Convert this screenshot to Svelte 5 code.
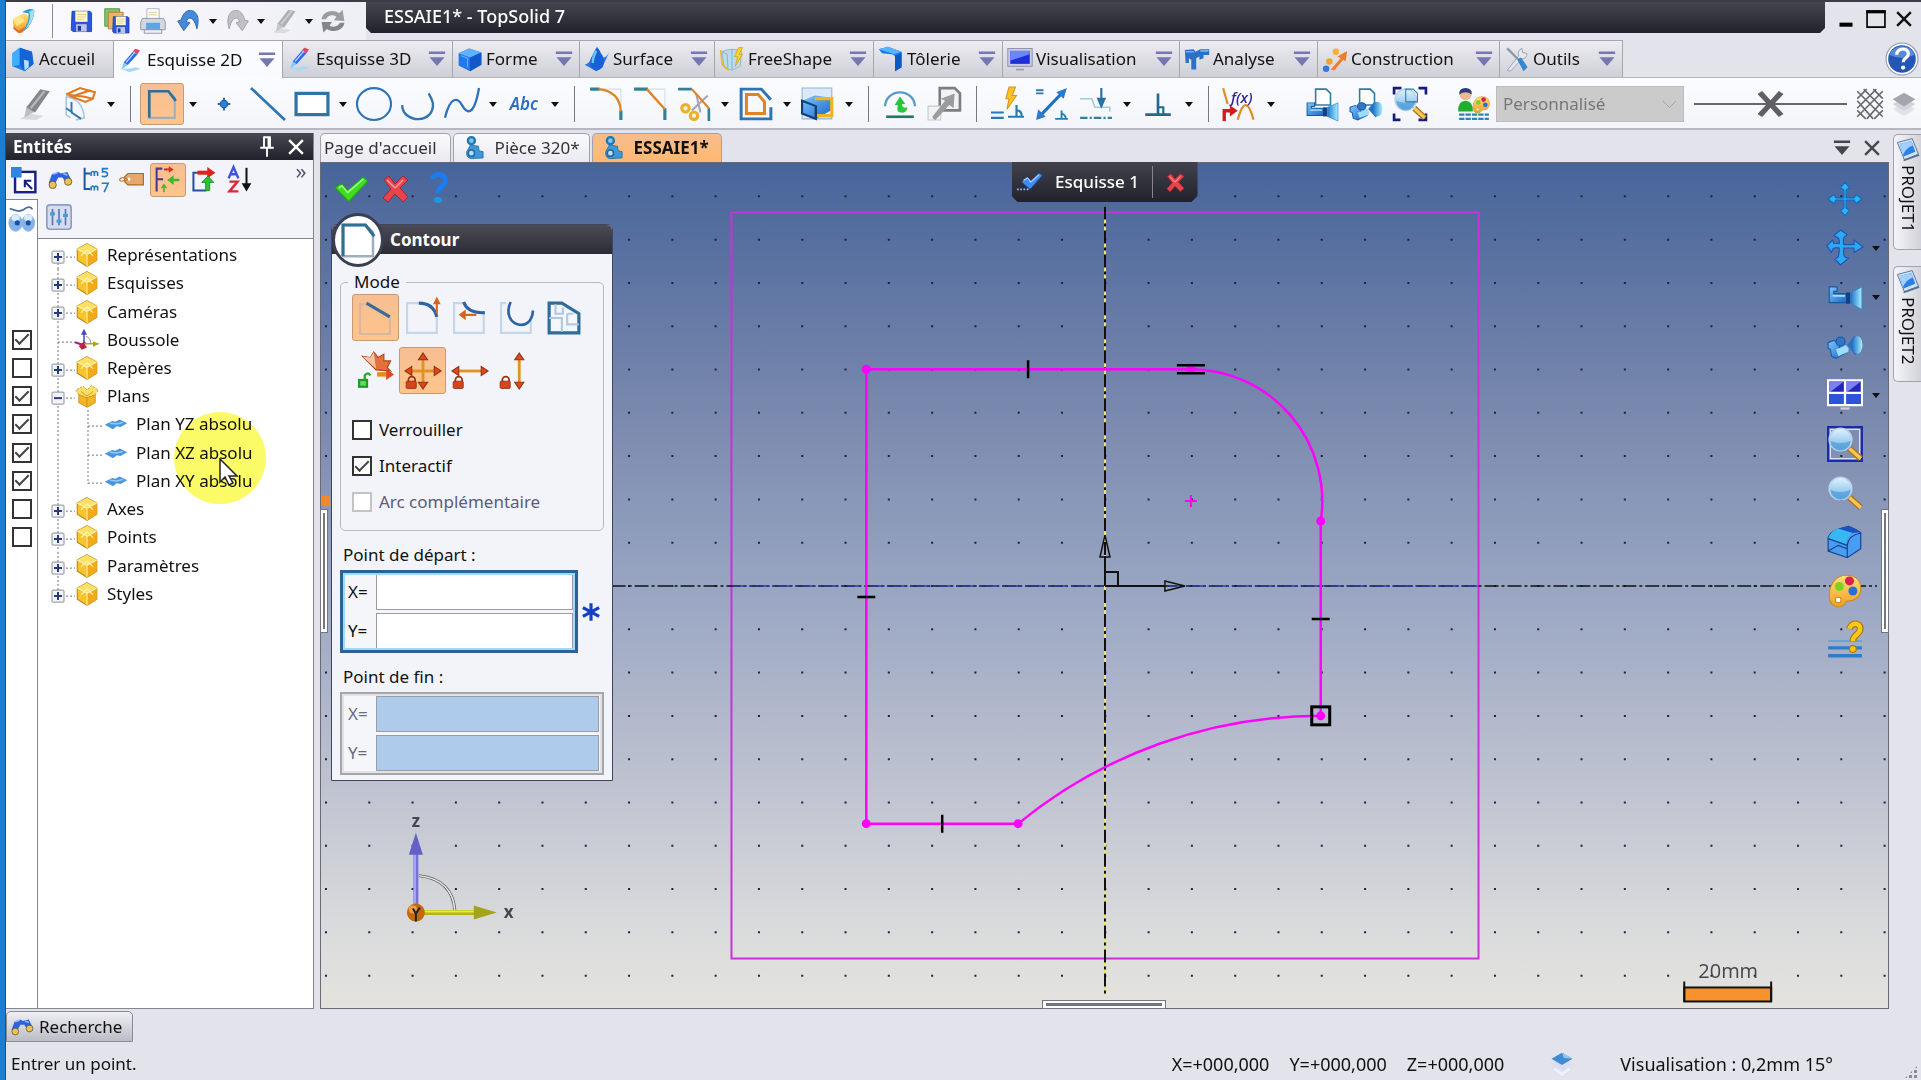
<script lang="ts">
  // every icon is drawn on a 32 x 32 grid
  const magnifier = `<circle cx="12" cy="12" r="10" fill="url(#lens)" stroke="#b9d3ea" stroke-width="1.5"/><path d="M3 13q9 4 18 0a9 9 0 0 1-18 0z" fill="#3c8fd0" opacity=".55"/><path d="M20 20l10 9" stroke="#a8761a" stroke-width="5.5"/><path d="M20 20l10 9" stroke="#f6c65a" stroke-width="3"/>`;
  const pencil = (c: string, d: string) => `<path d="M1 30l8-5 14 2-7 4z" fill="${d}" opacity=".5"/><path d="M5 29l2-11 8 5z" fill="${d}"/><path d="M7 19L20 2l9 2-14 20z" fill="${c}"/><path d="M11 20L24 4" stroke="#fff" stroke-width="2" opacity=".4"/>`;
  const floppy = `<path d="M5 4h22l2 2v23H6l-2-2z" fill="#2c56d8" stroke="#2038a0"/><rect x="9" y="4" width="15" height="13" fill="#fdf7c8"/><path d="M11 8h11M11 11h11M11 14h8" stroke="#d9c987"/><rect x="10" y="20" width="13" height="9" fill="#b9c6ea"/><rect x="12" y="22" width="4" height="6" fill="#2038a0"/>`;
  const lock = `<path d="M3 26v-2a3 3 0 0 1 6 0v2" fill="none" stroke="#9a3312" stroke-width="1.5"/><rect x="1" y="25" width="9" height="6.500" rx="1" fill="#d8451c" stroke="#8a2a10" stroke-width=".7"/>`;
  const camera = `<path d="M2 7h7v4H6v2h12v8H2z" fill="url(#blue)" stroke="#155c9d"/><path d="M5 15h11" stroke="#a8e0ff" stroke-width="1.500"/><path d="M17 12h4v10h-4z" fill="#173f80"/><path d="M21 12l10-5v20l-10-5z" fill="url(#cyan)" stroke="#2c84c4" stroke-width=".7"/>`;
  const camera2 = `<path d="M1 13l5-2 5 3v4l6-2v6l-9 5-4-2-1-6-2-1z" fill="url(#blue)" stroke="#175ea8"/><path d="M8 19l9-4 2 3v3l-9 4z" fill="#9bdcff"/><circle cx="12" cy="12" r="4" fill="#2e78cc" stroke="#1a55a0"/><path d="M18 15l6-8 5 3v11l-4 3z" fill="#2770c4"/><ellipse cx="27" cy="15" rx="4.500" ry="8" fill="url(#cyan)"/>`;
  const binoculars = `<path d="M2 20l4-11 8-3 3 2 8-2 5 10-7 3-4-6-5 0-4 7z" fill="#2f63dd"/><path d="M7 9l6-2M20 8l5 2" stroke="#8fb5ff" stroke-width="2"/><circle cx="7" cy="22" r="4.500" fill="#e6c35c" stroke="#6b5212"/><circle cx="26" cy="18" r="4.500" fill="#e6c35c" stroke="#6b5212"/>`;
  const document = `<path d="M10 2h10l4 4v11H10z" fill="#fff" stroke="#2f7d9c" stroke-width="1.5"/>`;
  const palette = `<path d="M17 2c9 0 13 5 13 12 0 8-6 11-12 11-2 0-2 5-7 5-6 0-9-4-9-10C2 10 8 2 17 2z" fill="url(#gold)" stroke="#c98d24"/><circle cx="11" cy="12" r="4" fill="#7bd321"/><circle cx="20" cy="7" r="4" fill="#d9204f"/><circle cx="23" cy="16" r="4" fill="#2a6fd0"/><circle cx="10" cy="24" r="2.500" fill="#fff" stroke="#c98d24"/>`;

  const icons: Record<string, string> = {
    logo: `<path d="M3 14l13-7 8 5-3 12-10 5-7-6z" fill="url(#gold)"/><path d="M3 14l8-4 6 6-9 6z" fill="#ffe48a"/><path d="M4 22l6 5 8-5-4 7-4 1-6-5z" fill="#e8682c"/><path d="M14 6q9-6 14-2-1 16-14 25 9-14 7-22z" fill="#2a9fd0"/><path d="M22 5q6-3 6-1-1 13-11 22 8-12 5-21z" fill="#9fdcf0"/>`,
    save: floppy,
    saveAll: `<path d="M2 2h17v20H2z" fill="#83c46a" stroke="#4f8f3c"/><path d="M6 6h17v19H6z" fill="#e9b56a" stroke="#b87a2e"/><g transform="translate(8 8) scale(.75)">${floppy}</g>`,
    print: `<path d="M9 2h14v12H9z" fill="#fff" stroke="#aab"/><path d="M11 6h10M11 9h10" stroke="#e0c080"/><path d="M4 13h24l2 4v9H2v-9z" fill="#d4d7e2" stroke="#8a8fa0"/><path d="M8 18h16v8H8z" fill="#5ba6e6"/><path d="M6 26h20v4H6z" fill="#eef0f6" stroke="#8a8fa0"/>`,
    undo: `<path d="M1 16l7 11 7-9-4-1c2-7 9-6 12 8C28 8 19 1 11 5 8 7 6 11 5 15z" fill="#4689d8" stroke="#2360b0" transform="translate(2 0)"/>`,
    redo: `<path d="M31 16l-7 11-7-9 4-1c-2-7-9-6-12 8C4 8 13 1 21 5c3 2 5 6 6 10z" fill="#bfc1c6" stroke="#9c9ea4" transform="translate(-2 0)"/>`,
    pencilGrey: pencil("#b0b1b5", "#c6c7ca"),
    refresh: `<path d="M3 14C4 5 16 2 23 7l4-4 2 13-12-1 3-4c-5-3-10-1-12 3z" fill="#9b9ca1"/><path d="M29 18c-1 9-13 12-20 7l-4 4-2-12 12 0-3 4c5 3 10 1 12-3z" fill="#85868b"/>`,
    home: `<path d="M3 9l9-7 15 5 2 15-11 9L3 25z" fill="#1d7ff0"/><path d="M3 9l9-7v21l-9 2z" fill="#3fb0ff"/><path d="M12 2l15 5 2 15-11 9-6-8z" fill="#1464d8"/><path d="M17 17l6 1v8l-5 4z" fill="#aee4ff"/>`,
    sketch: `<path d="M2 26q12 2 20-1l6 2-14 4z" fill="#a9d9f5"/><path d="M4 28l3-9 5 3z" fill="#7ecbff"/><path d="M7 19L18 6l6 3-12 13z" fill="#2e6bea"/><path d="M18 6l3-4 6 2-3 5z" fill="#e63f6b"/><path d="M10 19L21 6" stroke="#b7dcff" stroke-width="1.500"/>`,
    cube: `<path d="M2 9l13-6 15 5v15l-14 8-14-7z" fill="#2476ea"/><path d="M2 9l13-6 15 5-14 6z" fill="#5fb2ff"/><path d="M16 14l14-6v15l-14 8z" fill="#1458c8"/><path d="M5 12l8 3v11" stroke="#7cc3ff" fill="none"/>`,
    surface: `<path d="M1 23q7-2 8-10l7 13 6-16q2 9 9-2-6 12-8 18l-8 5z" fill="#2a74dc"/><path d="M16 1q9 12 8 20-1 8-8 9-8-1-8-9Q8 14 16 1z" fill="#1660d8"/><path d="M15 6q-5 10-4 15" stroke="#69c4ff" stroke-width="3" fill="none"/>`,
    freeshape: `<path d="M4 7q12-6 24 0l-2 18-10 5-10-4z" fill="#b9dcec" stroke="#82b4cc"/><path d="M4 7l6 3 1 17M16 4v25" stroke="#7fa9c0" fill="none"/><path d="M2 5l2 18 8 7" stroke="#e7b722" stroke-width="2" fill="none"/><path d="M24 2l-5 11h4l-3 12 9-15h-4l4-8z" fill="#ffd42a" stroke="#d9a010"/>`,
    sheet: `<path d="M1 4l11-3 17 6v19l-8 5V14q0-3-4-4L5 9z" fill="#1a74e6"/><path d="M1 4l11-3 17 6-9 3z" fill="#53b7ff"/><path d="M21 13l8-5v18l-8 5z" fill="#0f56c6"/>`,
    screen: `<rect x="1" y="3" width="30" height="22" fill="#c9cbe0" stroke="#8486a6"/><rect x="4" y="6" width="24" height="16" fill="#1f2fd8"/><path d="M4 6h24v4L4 18z" fill="#6c86ff"/><path d="M11 28h10v2H11z" fill="#9a9cae"/>`,
    analysis: `<path d="M1 5l11-1 2 3 6-3h11v7h-7v4l-5 2v-4l-4 2v14h-6V17l-3-2v6H2z" fill="#2a6fc8"/><path d="M2 7h10M20 6h10" stroke="#74b4f4" stroke-width="2"/>`,
    construction: `<circle cx="5" cy="28" r="4" fill="#3478e0"/><circle cx="9" cy="19" r="4" fill="#f0a22c"/><circle cx="17" cy="7" r="4" fill="#f3b03a"/><path d="M11 29l12-14-4-2 12-7-2 13-3-2-11 13z" fill="#ef7b2a"/>`,
    tools: `<path d="M4 30l14-18q-2-6 4-9l1 5 5 1q1 6-6 7L8 31z" fill="#e4e8ee" stroke="#8e98a6"/><path d="M4 3l13 13" stroke="#8e98a6" stroke-width="3"/><path d="M16 16l5-2 8 12-5 5z" fill="#3587d0"/>`,
    help: `<circle cx="16" cy="16" r="15" fill="#fff" stroke="#8d98b4"/><circle cx="16" cy="16" r="13" fill="#2457b4"/><path d="M4 12a13 13 0 0 1 24 0q-12 6-24 0z" fill="#6f9fe2" opacity=".7"/><path d="M11 12c0-7 11-7 11-1 0 4-5 4-5 8" fill="none" stroke="#fff" stroke-width="3"/><circle cx="17" cy="24" r="2" fill="#fff"/>`,
    pencilBig: pencil("#85878c", "#bcbdc1"),
    sketchPlane: `<path d="M3 9v17l4 3M3 9q16 3 17 20l-8 2" fill="#f2f8fd" stroke="#a9c6e0" stroke-width="1.500"/><path d="M3 7L16 1l14 4-2 6-7 3-13-5 18-6M3 7l16 2 9 2" fill="none" stroke="#df7a25" stroke-width="2"/><path d="M8 14v10l9 6M9 24l-6-4" fill="none" stroke="#2f78a8" stroke-width="1.800"/>`,
    contour: `<path d="M4 4h18l6 6v19H4z" fill="none" stroke="#9fb0bc" stroke-width="2"/><path d="M4 29V4h18l7 9" fill="none" stroke="#2f6f95" stroke-width="2.500"/>`,
    point: `<path d="M16 10v12M10 16h12" stroke="#2a6fb0" stroke-width="2"/><circle cx="16" cy="16" r="3.500" fill="#2f7fdc" stroke="#1c5aa8"/>`,
    line: `<path d="M0 1l32 30" stroke="#2e74b5" stroke-width="2.500"/>`,
    rect: `<rect x="1" y="6" width="30" height="20" fill="#fff" stroke="#2f72a4" stroke-width="3"/>`,
    circle: `<ellipse cx="16" cy="16" rx="16" ry="15" fill="none" stroke="#2e74b5" stroke-width="2"/>`,
    arc: `<path d="M1 17C2 35 32 35 30 15q-1-4-4-9" fill="none" stroke="#2e74b5" stroke-width="2.200"/>`,
    curve: `<path d="M0 29C5 8 12 10 16 17s11 13 16-16" fill="none" stroke="#2e74b5" stroke-width="2.200"/>`,
    fillet: `<path d="M4 2h26v28" fill="none" stroke="#cfe0ea" stroke-width="1"/><path d="M1 2h9M30 22v9" stroke="#2f8296" stroke-width="3"/><path d="M9 2q20 2 21 21" fill="none" stroke="#df8324" stroke-width="2.200"/>`,
    chamfer: `<path d="M4 2h26v28" fill="none" stroke="#cfe0ea"/><path d="M1 2h13M30 20v11" stroke="#2f8296" stroke-width="3"/><path d="M13 2l17 19" stroke="#df8324" stroke-width="2.200"/>`,
    trim: `<path d="M1 2h13M30 20v12" fill="none" stroke="#2f8296" stroke-width="2.500"/><path d="M29 8L14 22M18 6l4 18" stroke="#a5a8b4" stroke-width="2"/><path d="M14 2l16 18" stroke="#df8324" stroke-width="2"/><circle cx="8" cy="20" r="3.500" fill="none" stroke="#eab128" stroke-width="3"/><circle cx="16" cy="27" r="3.500" fill="none" stroke="#eab128" stroke-width="3"/>`,
    offset: `<path d="M30 19v11H2V2h19l9 10" fill="none" stroke="#2e74b5" stroke-width="2.800"/><path d="M24 19v6H7V7h11l6 7v5" fill="none" stroke="#df8324" stroke-width="2.800"/>`,
    project: `<path d="M1 1h28v29H1z" fill="#dbe9f8" stroke="#8fb4d8"/><path d="M1 13l12-5 15 2v12l-14 8-13-5z" fill="url(#blue)"/><path d="M14 18v12" stroke="#123c74" stroke-width="2"/><path d="M13 11h16v16H15" fill="none" stroke="#f0b51c" stroke-width="3"/><path d="M1 13l13 5v12L1 25z" fill="none" stroke="#123c74" stroke-width="2"/>`,
    rebuild: `<path d="M2 18a14 13 0 0 1 28 0" fill="none" stroke="#5b9ac4" stroke-width="2.200"/><path d="M3 28h26" stroke="#1f7868" stroke-width="2.500"/><path d="M11 17l5-8 5 7h-3q0 5 5 3-1 6-6 5-5 0-3-7z" fill="#28c638"/>`,
    copyGrey: `<path d="M12 1h14l5 5v16H12z" fill="#f3f3f3" stroke="#7d7e82" stroke-width="2.500"/><path d="M1 18h12v13H1z" fill="#f3f3f3" stroke="#c7c8cc"/><path d="M6 30l-1-2 12-15-4-2 13-5-1 14-4-3-13 14z" fill="#9b9ca0"/>`,
    autoConstraint: `<path d="M17 0l-3 11h3l-2 10 9-13h-4l3-8z" fill="#ffc423" stroke="#d8941a"/><path d="M0 24h12M0 29h12M16 28h15M24 17v11M24 22q5 0 5 6" fill="none" stroke="#2479b6" stroke-width="2"/>`,
    dimension: `<path d="M3 29L27 4" stroke="#1f6fc4" stroke-width="3"/><path d="M30 1l-3 10-7-6zM1 31l2-10 7 7z" fill="#2a7bd0"/><path d="M1 3h7M1 6h7M19 30h12M25 22v8M25 25q4 1 4 5" fill="none" stroke="#2a7bb0" stroke-width="1.800"/>`,
    projectLine: `<path d="M1 11h11l3 8h14v4" fill="none" stroke="#a5c8d8" stroke-width="1.500"/><path d="M21 1v14M18 11l3 7 3-7z" stroke="#2470a8" stroke-width="2" fill="#2470a8"/><path d="M1 29h30" stroke="#2f8296" stroke-width="2" stroke-dasharray="7 2 2 2"/>`,
    perpendicular: `<path d="M4 26h24M16 6v20" stroke="#1f6a8e" stroke-width="2.500"/><path d="M16 19h5v7" fill="none" stroke="#1f6a8e" stroke-width="2"/>`,
    camDoc: `${document}<g transform="translate(0 9) scale(1 .85)">${camera}</g>`,
    camDoc2: `${document}<g transform="translate(0 8) scale(1 .85)">${camera2}</g>`,
    zoomDoc: `<path d="M8 1H1v6M24 1h7v6M1 25v6h6M31 25v6h-7" fill="none" stroke="#171a7c" stroke-width="2.500"/>${magnifier}<path d="M12 2h7l4 4v8H12z" fill="none" stroke="#2f7d9c"/>`,
    people: `<circle cx="8" cy="7" r="5.500" fill="#eab891"/><path d="M2 7q0-6 6-6t6 6q-6-4-12 0z" fill="#303c78"/><path d="M1 23q0-10 7-10t7 10z" fill="#1fae2e"/><g transform="translate(14 8) scale(.55)">${palette}</g><path d="M2 26h28M2 30h28" stroke="#2d82b0" stroke-width="2" stroke-dasharray="5 1"/>`,
    hatch: `<path d="M4 4l24 24M4 13l15 17M4 22l8 8M10 2l18 18M19 2l9 9M28 4L4 28M28 13L13 30M28 22l-8 8M22 2L4 20M13 2l-9 9" stroke="#68696d" stroke-width="1.500" fill="none"/>`,
    layersGrey: `<path d="M16 14l14 8-14 9-14-9z" fill="#e2e3e8"/><path d="M16 8l14 8-14 9-14-9z" fill="#d3d4da"/><path d="M16 2l14 8-14 9-14-9z" fill="#a4a6ad"/>`,
    layersBlue: `<path d="M16 15l12 7-12 9-12-9z" fill="#f0eef8" stroke="#d8d4ea"/><path d="M16 10l12 7-12 8-12-8z" fill="#dcdcf2"/><path d="M16 3l12 7-12 7-12-7z" fill="#3f8bd6"/><path d="M16 3l12 7-10-1z" fill="#8cc4f4"/>`,
    selectArrow: `<rect x="5" y="6" width="25" height="25" fill="#fff" stroke="#171f80" stroke-width="3"/><rect x="0" y="0" width="13" height="13" fill="#2f86e0"/><path d="M17 18l9 9M17 25v-8h8" stroke="#171f80" stroke-width="2.500" fill="none"/>`,
    binoculars,
    params: `<path d="M2 1v26h7M2 8h7" fill="none" stroke="#1f5aa0" stroke-width="2.500"/><path d="M10 11V7q2-3 4 0v4V7q2-3 4 0v4M10 29v-4q2-3 4 0v4-4q2-3 4 0v4M31 2h-7v4q7-1 6 4-2 3-7 1M23 20h8l-5 11" fill="none" stroke="#2479c0" stroke-width="2"/>`,
    tag: `<path d="M7 12l4-4h19v14H11l-4-4z" fill="#e9a86b" stroke="#a86a2f" stroke-width="1.500"/><circle cx="12" cy="15" r="2" fill="#fff"/><path d="M11 15Q3 11 1 15t10 1" fill="none" stroke="#c07a3c" stroke-width="1.500"/>`,
    treeArrows: `<path d="M9 2H2v28M2 15h8" fill="none" stroke="#473a8c" stroke-width="2.500"/><path d="M11 3h7" stroke="#d6301c" stroke-width="2.500"/><path d="M17-1l6 4-6 4z" fill="#d6301c"/><path d="M22 16h8" stroke="#3fb82e" stroke-width="3"/><path d="M23 10l-8 6 8 6z" fill="#3fb82e"/><path d="M11 31v-8M8 26l3-4 3 4" stroke="#3fb82e" stroke-width="2" fill="none"/>`,
    exportTree: `<path d="M14 7H3v22h16" fill="none" stroke="#2a4fa0" stroke-width="2.500"/><path d="M8 7h14" stroke="#d8261c" stroke-width="5"/><path d="M20 0l10 7-10 7z" fill="#d8261c"/><path d="M18 29V19h-5l8-8 7 8h-5v10z" fill="#2fbf36" stroke="#188a22"/>`,
    sortAZ: `<path d="M2 14L8 0l6 14M4 9h8" fill="none" stroke="#3f52d8" stroke-width="3"/><path d="M3 18h10L3 30h11" fill="none" stroke="#d8283c" stroke-width="3"/><path d="M24 1v22" stroke="#111" stroke-width="2.500"/><path d="M18 20h12l-6 10z" fill="#111"/>`,
    eyes: `<path d="M2 3q8 3 11 3 6-1 9-4 5-2 7 2" fill="none" stroke="#4a6c9c" stroke-width="2"/><ellipse cx="9" cy="20" rx="8" ry="10" fill="#7fb2ee" stroke="#9ab2d0"/><ellipse cx="24" cy="20" rx="7.500" ry="10" fill="#7fb2ee" stroke="#9ab2d0"/><ellipse cx="9" cy="14" rx="5" ry="4" fill="#d9ecff"/><ellipse cx="24" cy="14" rx="5" ry="4" fill="#d9ecff"/><circle cx="11" cy="20" r="3" fill="#1d4f9c"/><circle cx="24" cy="20" r="3" fill="#1d4f9c"/>`,
    sliders: `<rect x="1" y="1" width="30" height="30" rx="4" fill="#d5dcee" stroke="#8f9bc0" stroke-width="2"/><path d="M8 6v20M16 6v20M24 6v20" stroke="#5a74a8" stroke-width="2"/><path d="M5 12h6M13 21h6M21 14h6" stroke="#4a9cd8" stroke-width="4"/>`,
    folder: `<path d="M16 1l13 7v15l-13 8-13-8V8z" fill="#f8c32c" stroke="#b98a1c" stroke-width="1.500"/><path d="M16 1l13 7-13 7L3 8z" fill="#ffe066"/><path d="M16 15l13-7v15l-13 8z" fill="#f4a916"/><path d="M3 8l13 7 13-7M16 15v16M8 17l8-8 8 8" fill="none" stroke="#fff3b0" stroke-width="1.500"/>`,
    folderOpen: `<path d="M5 14l11 4 11-4v11l-11 6-11-6z" fill="#f5b522" stroke="#b98a1c"/><path d="M5 14l-4-6 10-5 5 5 6-6 9 6-4 6-11 4z" fill="#ffdf62" stroke="#b98a1c" stroke-dasharray="3 1.500"/><path d="M8 10l8 6 8-6M16 18v13" stroke="#b98a1c" fill="none"/>`,
    compass: `<path d="M12 20V5" stroke="#3a4ac8" stroke-width="2"/><path d="M8 9l4-8 4 8z" fill="#4a48c0"/><path d="M0 19l9 3 5-3" fill="none" stroke="#a02878" stroke-width="3"/><path d="M12 21h16" stroke="#a8a81c" stroke-width="2"/><path d="M24 18l9 3-9 4z" fill="#a8a820"/><path d="M5 24l7-4 4 6-7 3z" fill="#c42040"/><path d="M14 11q7 2 7 9" fill="none" stroke="#777"/>`,
    plane: `<path d="M1 17l10-5 4 1 6-3 10 5-9 5-5-1-5 4z" fill="#4a96de"/><path d="M8 15l9 1 8-2" stroke="#93c9f6" stroke-width="2" fill="none"/>`,
    part: `<circle cx="12" cy="6" r="4.500" fill="#7fc4ee" stroke="#1f78b4" stroke-width="3"/><path d="M11 11l-5 9q-1 8 6 9l15-1v-8l-5-1-1-6-7-1z" fill="#3d98d8" stroke="#1f6aa4"/><circle cx="12" cy="22" r="4" fill="#b8e0f8" stroke="#1f6aa4" stroke-width="2"/>`,
    ok: `<path d="M2 16l5-4 6 6L27 6l4 4-17 18z" fill="#3fdc22" stroke="#23a414"/><path d="M5 16l3-2 5 6L27 8" fill="none" stroke="#9cf585" stroke-width="1.500"/>`,
    cancel: `<path d="M5 8l5-4 6 8 8-8 5 4-8 8 8 9-5 5-8-8-7 8-5-4 8-9z" fill="#e8444c" stroke="#a82430"/><path d="M8 8l8 8 8-8" fill="none" stroke="#f69a9c" stroke-width="1.500"/>`,
    question: `<path d="M11 7c2-7 15-6 13 3-1 5-7 4-7 11" fill="none" stroke="#1b7cf0" stroke-width="5"/><ellipse cx="17" cy="28" rx="4" ry="3" fill="#169ce0"/>`,
    modeLine: `<path d="M5 3H1v28h28V15" fill="none" stroke="#d7b7a0" stroke-width="2"/><path d="M7 2l22 13" stroke="#3c6b98" stroke-width="3"/>`,
    modeTangent: `<path d="M12 2H1v28h28V15" fill="none" stroke="#c6d6ea" stroke-width="2"/><path d="M12 2q14 0 17 13" fill="none" stroke="#2c63a4" stroke-width="3"/><path d="M29 12V2M27 2l2-4 2 4z" stroke="#d8641c" stroke-width="2" fill="#d8641c"/>`,
    modeTangent2: `<path d="M9 2H1v28h28V12" fill="none" stroke="#c6d6ea" stroke-width="2"/><path d="M10 1q4 11 20 10" fill="none" stroke="#2c63a4" stroke-width="3"/><path d="M10 13h12M11 10l-4 3 4 3z" stroke="#d8641c" stroke-width="2" fill="#d8641c"/>`,
    modeArc: `<path d="M6 2H1v28h28V14" fill="none" stroke="#c6d6ea" stroke-width="2"/><path d="M10 1C0 23 30 32 31 9" fill="none" stroke="#2c63a4" stroke-width="2.500"/>`,
    modeFace: `<path d="M2 2h12l16 10v18H2z" fill="#f3f7fc" stroke="#2f6c98" stroke-width="3"/><path d="M8 3v9h7V6M2 16h12v13M19 12v10h11M19 12h6" fill="none" stroke="#b2c8e0" stroke-width="2"/>`,
    free: `<path d="M16 15L4 3l7 1 3-5 4 5 5-3v6l6 0-3 6 3 3z" fill="#e5713a" stroke="#b0441c"/><path d="M16 14L4 3l7 1 3-5z" fill="#f5c3a4"/><path d="M17 19h8" stroke="#e88a18" stroke-width="4"/><path d="M25 14l7 5-7 5z" fill="#e0481c"/><path d="M6 24v-4q3-4 5 0" fill="none" stroke="#21a82c" stroke-width="2"/><rect x="1" y="24" width="7" height="6" fill="#5ee05e" stroke="#1c9c28" stroke-width="2"/>`,
    move: `<path d="M16 4v24M4 16h24" stroke="#e0941c" stroke-width="2.500"/><path d="M16 0l4 6h-8zM16 32l4-6h-8zM0 16l6-4v8zM32 16l-6-4v8z" fill="#df4a1c" stroke="#9a2f10"/>${lock}`,
    moveH: `<path d="M5 16h22" stroke="#e0941c" stroke-width="2.500"/><path d="M0 16l6-4v8zM32 16l-6-4v8z" fill="#df4a1c" stroke="#9a2f10"/>${lock}`,
    moveV: `<path d="M18 4v24" stroke="#e0941c" stroke-width="2.500"/><path d="M18 0l4 6h-8zM18 32l4-6h-8z" fill="#df4a1c" stroke="#9a2f10"/>${lock}`,
    asterisk: `<path d="M16 2v28M3 9l26 14M3 23L29 9" stroke="#1440c4" stroke-width="5"/>`,
    pan: `<path d="M16 1l4 5-3 2v7h7l2-3 5 4-5 4-2-3h-7v7l3 2-4 5-4-5 3-2v-7H8l-2 3-5-4 5-4 2 3h7V8l-3-2z" fill="#2ab4f4" stroke="#1668c0"/>`,
    orbit: `<path d="M12 0l6 4-3 3q-1 4 0 6h9V9l8 6-8 5v-4h-9q-1 6 1 8l3 1-7 6-5-5 3-2q1-4 1-8-4-1-6 1l-1 3-4-6 5-5 1 3 5 0q0-4-1-5L6 5z" fill="#2fa8f4" stroke="#1a55b8"/>`,
    camera,
    camera2,
    views: `<rect x="1" y="3" width="30" height="22" fill="#2428b8" stroke="#fff" stroke-width="2"/><path d="M2 14V4h13zM17 14V4h13z" fill="#7a80f0"/><path d="M2 15h28v9H2z" fill="#2b55d8"/><path d="M16 3v22M1 14h30" stroke="#fff" stroke-width="2"/><path d="M12 28h8" stroke="#ccd" stroke-width="2"/>`,
    zoomAll: `<rect x="1" y="1" width="30" height="30" fill="none" stroke="#1a2aa8" stroke-width="2"/><rect x="3" y="3" width="26" height="26" fill="none" stroke="#dfe6f4"/>${magnifier}`,
    zoom: magnifier,
    solid: `<path d="M1 12q2-5 8-7l10-3q8 3 11 6v14L18 30 1 24z" fill="#4a9cf0" stroke="#123f8c"/><path d="M1 13q2-7 9-9l13 4q-6 3-6 10z" fill="#38b8f0"/><path d="M10 4l9-2 11 5-7 1z" fill="#1c50c4"/><path d="M18 30V19q1-9 12-11M1 13l17 6M1 24l9-5 8 3" fill="none" stroke="#123f8c"/>`,
    palette,
    askLines: `<path d="M1 17h30" stroke="#5aa2d8" stroke-width="1.500"/><path d="M1 23h30M1 30h30" stroke="#2f7cc8" stroke-width="3"/><path d="M20 6c2-7 12-5 9 2-1 3-6 4-6 9" fill="none" stroke="#a87a08" stroke-width="6"/><path d="M20 6c2-7 12-5 9 2-1 3-6 4-6 9" fill="none" stroke="#ffc61c" stroke-width="4"/><circle cx="23" cy="24" r="3" fill="#ffc61c" stroke="#a87a08"/>`,
    blueCheck: `<path d="M6 16l6-6 5 5L27 5l4 3-15 17z" fill="#3f8cf8" stroke="#1a58c8"/><path d="M8 14l5-3 4 5L27 7" stroke="#a8d0ff" fill="none" stroke-width="1.500"/><path d="M0 25h14" stroke="#9cc4f8" stroke-width="2" stroke-dasharray="2 2"/>`,
    book: `<path d="M3 7L22 2l8 20-18 7z" fill="#cfe4fa" stroke="#3f5c84"/><path d="M6 9l15-4 5 14-15 6z" fill="#2f7fe8"/><path d="M6 9l15-4 2 6q-8 2-13 12z" fill="#9fd0ff"/><path d="M11 30l20-7" stroke="#5a6f8c" stroke-width="2"/>`,
    pin: `<path d="M11 3h10M12 3v14M20 3v14M18 3v14M7 17h18M16 17v12" stroke="#fff" stroke-width="2.500" fill="none"/>`,
    close: `<path d="M6 6l20 20M26 6L6 26" stroke="currentColor" stroke-width="3.500"/>`,
    minimize: `<path d="M8 23h16" stroke="#000" stroke-width="5"/>`,
    maximize: `<path d="M5 7h22v19H5z" fill="none" stroke="#000" stroke-width="2"/><path d="M4 7h24" stroke="#000" stroke-width="4"/>`,
    dropBar: `<path d="M3 6h26" stroke="currentColor" stroke-width="4"/><path d="M4 13h24L16 27z" fill="currentColor"/>`
  };

  const ribbonTabs = [
    { label: "Accueil", icon: "home", width: 108 },
    { label: "Esquisse 2D", icon: "sketch", width: 169 },
    { label: "Esquisse 3D", icon: "sketch", width: 170 },
    { label: "Forme", icon: "cube", width: 127 },
    { label: "Surface", icon: "surface", width: 135 },
    { label: "FreeShape", icon: "freeshape", width: 159 },
    { label: "Tôlerie", icon: "sheet", width: 129 },
    { label: "Visualisation", icon: "screen", width: 177 },
    { label: "Analyse", icon: "analysis", width: 138 },
    { label: "Construction", icon: "construction", width: 182 },
    { label: "Outils", icon: "tools", width: 123 }
  ];

  // "|" separator, "v" drop-down arrow, "_" blank
  const tools = [
    "pencilBig", "sketchPlane", "v", "|", "contour", "v", "point", "line", "rect", "v",
    "circle", "arc", "curve", "v", "Abc", "v", "|", "fillet", "chamfer", "trim", "v",
    "offset", "v", "project", "v", "|", "rebuild", "copyGrey", "|", "autoConstraint",
    "dimension", "projectLine", "v", "perpendicular", "v", "|", "fx", "v", "_",
    "camDoc", "camDoc2", "zoomDoc", "_", "people"
  ];

  const tree = [
    { label: "Représentations", icon: "folder", box: "+" },
    { label: "Esquisses", icon: "folder", box: "+" },
    { label: "Caméras", icon: "folder", box: "+" },
    { label: "Boussole", icon: "compass", checked: true },
    { label: "Repères", icon: "folder", box: "+", checked: false },
    { label: "Plans", icon: "folderOpen", box: "-", checked: true },
    { label: "Plan YZ absolu", icon: "plane", child: true, checked: true },
    { label: "Plan XZ absolu", icon: "plane", child: true, checked: true },
    { label: "Plan XY absolu", icon: "plane", child: true, checked: true, lastChild: true },
    { label: "Axes", icon: "folder", box: "+", checked: false },
    { label: "Points", icon: "folder", box: "+", checked: false },
    { label: "Paramètres", icon: "folder", box: "+" },
    { label: "Styles", icon: "folder", box: "+" }
  ];

  const entityTools = ["selectArrow", "binoculars", "params", "tag", "treeArrows", "exportTree", "sortAZ"];
  const modes = ["modeLine", "modeTangent", "modeTangent2", "modeArc", "modeFace"];
  const directions = ["free", "move", "moveH", "moveV"];

  const viewTools = [
    { icon: "pan" },
    { icon: "orbit", more: true },
    { icon: "camera", more: true },
    { icon: "camera2" },
    { icon: "views", more: true },
    { icon: "zoomAll" },
    { icon: "zoom" },
    { icon: "solid" },
    { icon: "palette" },
    { icon: "askLines" }
  ];

  let activeTab = $state("Esquisse 2D");
  let mode = $state("modeLine");
  let direction = $state("move");
  let opacity = $state(50);
</script>

{#snippet icon(name: string, size: number)}
  <svg class="icon" width={size} height={size} viewBox="0 0 32 32" aria-hidden="true">{@html icons[name]}</svg>
{/snippet}

<svg class="defs" aria-hidden="true">
  <defs>
    <linearGradient id="blue" x1="0" y1="0" x2="1" y2="1"><stop offset="0" stop-color="#7cc8ff" /><stop offset="1" stop-color="#1c64c4" /></linearGradient>
    <linearGradient id="cyan" x1="0" y1="0" x2="1" y2="0"><stop offset="0" stop-color="#1f74c8" /><stop offset="1" stop-color="#a8f0ff" /></linearGradient>
    <linearGradient id="gold" x1="0" y1="0" x2="0" y2="1"><stop offset="0" stop-color="#ffdf7c" /><stop offset="1" stop-color="#f0a024" /></linearGradient>
    <linearGradient id="lens" x1="0" y1="0" x2="0" y2="1"><stop offset="0" stop-color="#e4f3ff" /><stop offset="1" stop-color="#6fb4e8" /></linearGradient>
  </defs>
</svg>

<div class="window">
  <header class="titlebar">
    <div class="quick">
      <button class="logo" aria-label="TopSolid">{@render icon("logo", 28)}</button>
      <span class="rule"></span>
      <button aria-label="Enregistrer">{@render icon("save", 26)}</button>
      <button aria-label="Tout enregistrer">{@render icon("saveAll", 28)}</button>
      <button aria-label="Imprimer">{@render icon("print", 28)}</button>
      <button aria-label="Annuler">{@render icon("undo", 28)}</button>
      <span class="caret"></span>
      <button aria-label="Rétablir">{@render icon("redo", 28)}</button>
      <span class="caret"></span>
      <button aria-label="Modifier">{@render icon("pencilGrey", 26)}</button>
      <span class="caret"></span>
      <button aria-label="Actualiser">{@render icon("refresh", 28)}</button>
    </div>
    <h1>ESSAIE1* - TopSolid 7</h1>
    <div class="winbuttons">
      <button aria-label="Réduire">{@render icon("minimize", 26)}</button>
      <button aria-label="Agrandir">{@render icon("maximize", 26)}</button>
      <button aria-label="Fermer">{@render icon("close", 22)}</button>
    </div>
  </header>

  <nav class="ribbon">
    {#each ribbonTabs as tab}
      <button class="tab" class:active={tab.label === activeTab} style:width="{tab.width}px" onclick={() => (activeTab = tab.label)}>
        {@render icon(tab.icon, 26)}
        <span>{tab.label}</span>
        {#if tab.label !== "Accueil"}
          <span class="drop">{@render icon("dropBar", 20)}</span>
        {/if}
      </button>
    {/each}
    <button class="help" aria-label="Aide">{@render icon("help", 34)}</button>
  </nav>

  <div class="toolbar">
    {#each tools as tool}
      {#if tool === "v"}
        <button class="more" aria-label="Plus"><span class="caret"></span></button>
      {:else if tool === "|"}
        <span class="sep"><i></i></span>
      {:else if tool === "_"}
        <span class="sep"></span>
      {:else if tool === "Abc"}
        <button class="tool abc">Abc</button>
      {:else if tool === "fx"}
        <button class="tool" aria-label="Fonction">
          <svg width="36" height="36" viewBox="0 0 32 32">
            <path d="M1 2l4 14M14 30q7-26 14 0" fill="none" stroke="#df8f24" stroke-width="2" />
            <path d="M2 31V22h6" fill="none" stroke="#d01c1c" stroke-width="3" /><path d="M7 17l7 5-7 5z" fill="#d01c1c" />
            <text x="8" y="15" class="fx">f(x)</text>
          </svg>
        </button>
      {:else}
        <button class="tool" class:on={tool === "contour"} aria-label={tool}>{@render icon(tool, 34)}</button>
      {/if}
    {/each}
    <select class="style" aria-label="Style" disabled><option>Personnalisé</option></select>
    <input class="slider" type="range" bind:value={opacity} aria-label="Opacité" />
    <button class="end" aria-label="Hachures">{@render icon("hatch", 34)}</button>
    <button class="end" aria-label="Calques">{@render icon("layersGrey", 26)}</button>
  </div>

  <div class="work">
    <aside class="entities">
      <div class="panelhead">
        <h2>Entités</h2>
        <button aria-label="Épingler">{@render icon("pin", 24)}</button>
        <button aria-label="Fermer">{@render icon("close", 22)}</button>
      </div>
      <div class="entitytools">
        {#each entityTools as tool}
          <button class:on={tool === "treeArrows"} aria-label={tool}>{@render icon(tool, 26)}</button>
        {/each}
        <button class="overflow" aria-label="Suite">»</button>
      </div>
      <div class="subtabs">
        <button class="eyes" aria-label="Visibilité">{@render icon("eyes", 27)}</button>
        <button class="params" aria-label="Réglages">{@render icon("sliders", 26)}</button>
      </div>
      <div class="treebox">
        <ul class="tree">
          {#each tree as row, i}
            <li>
              <span class="check">
                {#if row.checked !== undefined}
                  <input type="checkbox" checked={row.checked} aria-label={row.label} />
                {/if}
              </span>
              <svg class="branch" width={row.child ? 66 : 37} height="100%" aria-hidden="true">
                <line x1="20" x2="20" y1={i === 0 ? "50%" : "0"} y2={i === tree.length - 1 ? "50%" : "100%"} />
                {#if row.child}
                  <line x1="50" x2="50" y1="0" y2={row.lastChild ? "60%" : "100%"} />
                {/if}
                <svg y="50%" overflow="visible">
                  <line x1={row.child ? 50 : 20} x2={row.child ? 66 : 38} y1="2" y2="2" />
                  {#if row.box}
                    <rect x="14" y="-4" width="12" height="12" rx="1" fill="#f2f4fa" stroke="#8a8f9c" />
                    <path d={row.box === "+" ? "M16 2h8M20-2v8" : "M16 2h8"} stroke="#2a3a78" stroke-width="2" />
                  {/if}
                </svg>
              </svg>
              {@render icon(row.icon, 24)}
              <span class="label">{row.label}</span>
            </li>
          {/each}
        </ul>
        <span class="halo"></span>
        <svg class="cursor" width="20" height="28" viewBox="0 0 20 28" aria-hidden="true">
          <path d="M1 1v23l5-5 4 8 4-2-4-7h8z" fill="#fff" stroke="#222" stroke-width="1.500" />
        </svg>
      </div>
    </aside>

    <main>
      <div class="doctabs">
        <button>Page d'accueil</button>
        <button>{@render icon("part", 25)} Pièce 320*</button>
        <button class="current">{@render icon("part", 25)} ESSAIE1*</button>
        <span class="docactions">
          <button aria-label="Liste">{@render icon("dropBar", 20)}</button>
          <button aria-label="Fermer">{@render icon("close", 22)}</button>
        </span>
      </div>

      <div class="canvas">
        <!-- origin of the sketch is at 0,0 -->
        <svg class="drawing" viewBox="-785 -424 1569 847" preserveAspectRatio="xMidYMid slice">
          {#each Array(19) as _, r}
            <line class="dots" x1="-781" x2="784" y1={(r - 9) * 43.35} y2={(r - 9) * 43.35} />
          {/each}

          <rect x="-374" y="-374" width="748" height="747" fill="none" stroke="#c832d8" stroke-width="2" />
          <path d="M-494 0H773" stroke="#111" stroke-width="1.500" stroke-dasharray="14 3 3 3" />
          <path d="M-373 0H373" stroke="#2c3ca8" stroke-width="1.500" stroke-dasharray="14 3 3 3" />
          <path d="M0-380V409" stroke="#e8e870" stroke-width="2" />
          <path d="M0-380V409" stroke="#111" stroke-width="2" stroke-dasharray="13 4 3 4" />

          <path class="contour" d="M-239-217H86A132 132 0 0 1 216-65V130A477 477 0 0 0-87 238H-239Z" />
          {#each [[-239, -217], [86, -217], [216, -65], [216, 130], [-87, 238], [-239, 238]] as p}
            <circle cx={p[0]} cy={p[1]} r="4.500" fill="#ff00ff" />
          {/each}
          <path class="mark" d="M-77-226v18M-163 229v18M-248 11h18M207 33h18M72-221h28M72-213h28" />
          <rect x="207" y="121" width="18" height="18" fill="none" stroke="#000" stroke-width="3" />
          <path d="M80-85h12M86-91v12" stroke="#ff00ff" stroke-width="2" />

          <path d="M0 0V-30M0 0H60M0-14H13V0" fill="none" stroke="#111" stroke-width="2" />
          <path d="M-5-29L0-51 5-29zM60-5L80 0 60 5z" fill="none" stroke="#111" stroke-width="1.500" />

          <g transform="translate(-690 327)">
            <path d="M3-37q34 4 36 35" fill="none" stroke="#555" stroke-width="3" />
            <path d="M3-37q34 4 36 35" fill="none" stroke="#eee" stroke-width="1.500" />
            <path d="M0 0V-60" stroke="#7672d8" stroke-width="5" /><path d="M-1 0V-60" stroke="#aaa8f8" stroke-width="2" />
            <path d="M-7-58L0-80 7-58z" fill="#6460c8" />
            <path d="M0 0H60" stroke="#b4b414" stroke-width="5" /><path d="M0-1H60" stroke="#eaea3c" stroke-width="2" />
            <path d="M58-7L81 0 58 7z" fill="#a4a418" />
            <circle r="9" fill="#c4680c" /><circle cx="-3" cy="-3" r="4" fill="#f0a040" />
            <path d="M-3-4L0 1 4-5M0 1V9" stroke="#222" stroke-width="2" fill="none" />
            <text x="0" y="-86">z</text>
            <text x="93" y="5">x</text>
          </g>

          <rect x="580" y="402" width="87" height="14" fill="#f7922c" stroke="#111" stroke-width="2" />
          <path d="M580 396v20M667 396v20" stroke="#111" stroke-width="2" />
          <text class="scale" x="624" y="393">20mm</text>
        </svg>

        <span class="splitter left"></span>
        <span class="splitter right"></span>
        <span class="splitter bottom"></span>
        <span class="pip"></span>

        <div class="confirm">
          <button aria-label="Valider">{@render icon("ok", 36)}</button>
          <button aria-label="Abandonner">{@render icon("cancel", 32)}</button>
          <button aria-label="Aide">{@render icon("question", 32)}</button>
        </div>

        <div class="editing">
          {@render icon("blueCheck", 26)}
          <strong>Esquisse 1</strong>
          <button aria-label="Quitter l'esquisse">{@render icon("cancel", 22)}</button>
        </div>

        <section class="dialog">
          <span class="badge">{@render icon("contour", 40)}</span>
          <h2>Contour</h2>
          <div class="body">
            <fieldset>
              <legend>Mode</legend>
              <div class="choices">
                {#each modes as name}
                  <button class:on={mode === name} aria-label={name} onclick={() => (mode = name)}>{@render icon(name, 34)}</button>
                {/each}
              </div>
              <div class="choices">
                {#each directions as name}
                  <button class:on={direction === name} aria-label={name} onclick={() => (direction = name)}>{@render icon(name, 36)}</button>
                {/each}
              </div>
              <div class="options">
                <label><input type="checkbox" /> Verrouiller</label>
                <label><input type="checkbox" checked /> Interactif</label>
                <label class="off"><input type="checkbox" disabled /> Arc complémentaire</label>
              </div>
            </fieldset>
            <p>Point de départ :</p>
            <div class="start">
              <div class="coords focus">
                <label for="sx">X=</label><input id="sx" type="text" />
                <label for="sy">Y=</label><input id="sy" type="text" />
              </div>
              {@render icon("asterisk", 20)}
            </div>
            <p>Point de fin :</p>
            <div class="coords disabled">
              <label for="ex">X=</label><input id="ex" type="text" disabled />
              <label for="ey">Y=</label><input id="ey" type="text" disabled />
            </div>
          </div>
        </section>

        <div class="viewtools">
          {#each viewTools as tool}
            <div>
              <button aria-label={tool.icon}>{@render icon(tool.icon, 36)}</button>
              {#if tool.more}<span class="caret"></span>{/if}
            </div>
          {/each}
        </div>
      </div>
    </main>

    <aside class="projects">
      <button>{@render icon("book", 25)} PROJET1</button>
      <button>{@render icon("book", 25)} PROJET2</button>
    </aside>
  </div>

  <footer>
    <button class="search">{@render icon("binoculars", 24)} Recherche</button>
    <div class="status">
      <span class="prompt">Entrer un point.</span>
      <span>X=+000,000</span>
      <span>Y=+000,000</span>
      <span>Z=+000,000</span>
      <span class="layers">{@render icon("layersBlue", 28)}</span>
      <span class="precision">Visualisation : 0,2mm 15°</span>
      <span class="grip"></span>
    </div>
  </footer>
</div>

<style>
  :global(body) {
    margin: 0;
    background: #e3e3ec;
  }

  .defs {
    position: absolute;
    width: 0;
    height: 0;
  }

  .window {
    display: flex;
    flex-direction: column;
    height: 100vh;
    box-sizing: border-box;
    border-left: 5px solid #1a7fd4;
    box-shadow: inset 1px 0 #2c4a70;
    padding-left: 1px;
    background: #e3e3ec;
    color: #111;
    font-family: "Noto Sans", "Open Sans", sans-serif;
    font-size: 17px;
    line-height: 24px;
    overflow: hidden;
  }

  button {
    display: flex;
    align-items: center;
    justify-content: center;
    padding: 0;
    border: 0;
    background: none;
    color: inherit;
    font: inherit;
    white-space: nowrap;
  }

  h1, h2, p {
    margin: 0;
    font-size: inherit;
  }

  .icon {
    flex: none;
    display: block;
    overflow: visible;
  }

  .caret {
    flex: none;
    width: 0;
    border: 4px solid transparent;
    border-top: 5px solid #111;
    border-bottom: 0;
  }

  .on {
    border: 1px solid #c99a72;
    border-radius: 3px;
    background: linear-gradient(#f6be93, #ffc58c);
  }

  /* title bar */
  .titlebar {
    display: flex;
    height: 33px;
    border-top: 2px solid #3c3c46;
    box-sizing: border-box;
  }

  .quick {
    display: flex;
    align-items: center;
    width: 360px;
    height: 38px;
    background: linear-gradient(90deg, #fbfbff, #eeeef5);
  }

  .quick button {
    width: 36px;
  }

  .quick .rule {
    width: 1px;
    height: 34px;
    margin: 0 10px 0 10px;
    background: #8a8a92;
  }

  .quick .caret {
    margin: 0 2px;
  }

  .titlebar h1 {
    flex: 1;
    padding-left: 18px;
    background: linear-gradient(#45454f, #22222c);
    clip-path: polygon(0 0, 100% 0, 100% 26px, calc(100% - 5px) 100%, 5px 100%, 0 26px);
    color: #fff;
    font-size: 18px;
    font-weight: 500;
    line-height: 29px;
  }

  .winbuttons {
    display: flex;
    align-items: center;
    gap: 4px;
    padding: 2px 6px 0 8px;
  }

  /* ribbon */
  .ribbon {
    display: flex;
    height: 37px;
    margin-top: 7px;
    border-bottom: 1px solid #b4b4bc;
  }

  .tab {
    box-sizing: border-box;
    justify-content: flex-start;
    gap: 3px;
    padding: 0 4px;
    border: 1px solid #a6a6ae;
    border-width: 1px 1px 0 0;
    background: linear-gradient(#ececf1, #cfcfd8);
  }

  .tab.active {
    height: 38px;
    background: #fafbff;
  }

  .drop {
    margin: 0 1px 0 auto;
    color: #7676b0;
  }

  .help {
    margin-left: auto;
    margin-right: 2px;
  }

  /* toolbar */
  .toolbar {
    display: flex;
    align-items: center;
    box-sizing: border-box;
    height: 52px;
    padding: 2px 0 0 8px;
    border-bottom: 2px solid #b7b7c0;
    background: linear-gradient(#fbfcff, #f4f5fa);
  }

  .tool {
    flex: none;
    box-sizing: border-box;
    width: 44px;
    height: 42px;
  }

  .abc {
    color: #2a6fc0;
    font-weight: 600;
    font-style: italic;
  }

  .fx {
    font: italic 600 13px "Open Sans", sans-serif;
    fill: #3a22a0;
  }

  .more {
    flex: none;
    width: 18px;
    height: 40px;
  }

  .sep {
    flex: none;
    display: flex;
    justify-content: center;
    width: 20px;
  }

  .sep i {
    width: 1px;
    height: 36px;
    background: #77777f;
  }

  .style {
    flex: none;
    appearance: none;
    width: 188px;
    height: 36px;
    padding: 0 6px;
    border: 1px solid #bdbdbf;
    border-radius: 0;
    background:
      linear-gradient(-45deg, transparent 46%, #a4a4a4 46% 56%, transparent 56%) 172px 14px / 7px 7px no-repeat,
      linear-gradient(45deg, transparent 46%, #a4a4a4 46% 56%, transparent 56%) 166px 14px / 7px 7px no-repeat,
      #cbcbcb;
    color: #77777a;
    font: inherit;
    opacity: 1;
  }

  .slider {
    flex: 1;
    appearance: none;
    min-width: 60px;
    height: 36px;
    margin: 0 6px 0 10px;
    background: linear-gradient(#66666a, #66666a) center / 100% 2px no-repeat;
  }

  .slider::-webkit-slider-thumb {
    appearance: none;
    width: 26px;
    height: 26px;
    background: #606064;
    clip-path: polygon(0 12%, 18% 0, 50% 36%, 82% 0, 100% 12%, 64% 50%, 100% 88%, 82% 100%, 50% 64%, 18% 100%, 0 88%, 36% 50%);
  }

  .end {
    flex: none;
    width: 34px;
  }

  /* middle area */
  .work {
    display: flex;
    flex: 1;
    min-height: 0;
    padding-top: 3px;
  }

  .entities {
    display: flex;
    flex-direction: column;
    box-sizing: border-box;
    width: 308px;
    margin-right: 6px;
    border-right: 1px solid #85858d;
    border-bottom: 1px solid #85858d;
    background: #f3f4f9;
  }

  .panelhead {
    display: flex;
    align-items: center;
    gap: 6px;
    height: 27px;
    padding: 0 6px 0 7px;
    background: linear-gradient(#474751, #22222c);
    color: #fff;
  }

  .panelhead h2 {
    margin-right: auto;
    font-size: 17px;
  }

  .entitytools {
    display: flex;
    align-items: center;
    height: 39px;
  }

  .entitytools button {
    box-sizing: border-box;
    width: 36px;
    height: 34px;
  }

  .entitytools .overflow {
    align-self: flex-start;
    width: 24px;
    height: 20px;
    margin-left: auto;
    color: #555a70;
    font-size: 22px;
  }

  .subtabs {
    display: flex;
    gap: 8px;
    height: 39px;
    border-bottom: 1px solid #85858d;
  }

  .subtabs .eyes {
    box-sizing: border-box;
    width: 32px;
    height: 40px;
    border: 1px solid #85858d;
    border-width: 1px 1px 0 0;
    background: #fff;
  }

  .subtabs .params {
    height: 36px;
  }

  .treebox {
    position: relative;
    flex: 1;
    background: linear-gradient(90deg, #fff 31px, #85858d 31px 32px, #fff 32px);
  }

  .tree {
    display: grid;
    grid-auto-rows: 1fr;
    height: 367px;
    margin: 0;
    padding: 2px 0 0;
    list-style: none;
  }

  .tree li {
    display: flex;
    align-items: center;
    min-height: 0;
  }

  .check {
    display: flex;
    justify-content: center;
    width: 32px;
  }

  .branch line {
    stroke: #777;
    stroke-dasharray: 2 2;
  }

  .label {
    margin-left: 8px;
  }

  input[type="checkbox"] {
    flex: none;
    appearance: none;
    display: grid;
    place-items: center;
    box-sizing: border-box;
    width: 20px;
    height: 20px;
    margin: 0;
    border: 2px solid #333;
    background: #fff;
  }

  input[type="checkbox"]:disabled {
    border-color: #c4c4c8;
  }

  input[type="checkbox"]:checked::after {
    content: "";
    width: 12px;
    height: 5px;
    margin-bottom: 4px;
    border: solid #444;
    border-width: 0 0 2px 2px;
    transform: rotate(-45deg);
  }

  .halo {
    position: absolute;
    top: 173px;
    left: 168px;
    width: 92px;
    height: 92px;
    border-radius: 50%;
    background: #fbfb68;
    mix-blend-mode: multiply;
  }

  .cursor {
    position: absolute;
    top: 219px;
    left: 213px;
  }

  main {
    display: flex;
    flex: 1;
    flex-direction: column;
    min-width: 0;
  }

  .doctabs {
    display: flex;
    gap: 2px;
    height: 29px;
  }

  .doctabs > button {
    box-sizing: border-box;
    gap: 8px;
    padding: 0 9px 0 8px;
    border: 1px solid #a3a3ab;
    border-bottom: 0;
    border-radius: 5px 5px 0 0;
    background: linear-gradient(#fafafd, #e9e9f1);
    color: #333;
  }

  .doctabs > button:first-child {
    padding: 0 13px 0 3px;
  }

  .doctabs > .current {
    padding-right: 12px;
    background: linear-gradient(#f7bd8e, #ffb871);
    color: #111;
    font-weight: 700;
  }

  .docactions {
    display: flex;
    gap: 9px;
    margin-left: auto;
    padding-right: 6px;
    color: #47474b;
  }

  .canvas {
    position: relative;
    flex: 1;
    min-height: 0;
    box-sizing: border-box;
    border: 1px solid #6a6a74;
    background: linear-gradient(#47649a, #7a89ae 30%, #98a5c2 50%, #bec2d0 73%, #d9dadc 90%, #e4e3de);
  }

  .drawing {
    display: block;
    position: absolute;
    width: 100%;
    height: 100%;
  }

  .drawing text {
    font: 700 17px "Open Sans", sans-serif;
    fill: #45454d;
    text-anchor: middle;
  }

  .drawing .scale {
    font: 20px "Open Sans", sans-serif;
  }

  .dots {
    stroke: #1c2438;
    stroke-width: 2;
    stroke-dasharray: 2 41.35;
  }

  .contour {
    fill: none;
    stroke: #ff00ff;
    stroke-width: 2.5;
  }

  .mark {
    fill: none;
    stroke: #000;
    stroke-width: 2.5;
  }

  .splitter {
    position: absolute;
    box-sizing: border-box;
    border: 1px solid #75757f;
    background: linear-gradient(#75757f, #75757f) center / 2px 116px no-repeat, #fff;
  }

  .splitter.left,
  .splitter.right {
    top: 41%;
    width: 8px;
    height: 124px;
  }

  .splitter.left {
    left: -1px;
  }

  .splitter.right {
    right: -1px;
  }

  .splitter.bottom {
    bottom: -1px;
    left: 46%;
    width: 124px;
    height: 9px;
    background: linear-gradient(#75757f, #75757f) center / 116px 3px no-repeat, #fff;
  }

  .pip {
    position: absolute;
    top: 333px;
    left: 0;
    width: 9px;
    height: 10px;
    background: #f08a24;
  }

  .confirm {
    position: absolute;
    top: 7px;
    left: 12px;
    display: flex;
    gap: 10px;
  }

  .editing {
    position: absolute;
    top: -1px;
    left: 50%;
    display: flex;
    align-items: center;
    box-sizing: border-box;
    width: 186px;
    height: 40px;
    padding-left: 5px;
    transform: translateX(-50%);
    background: linear-gradient(#42424c, #22222c);
    clip-path: polygon(0 0, 100% 0, 100% 34px, 180px 100%, 6px 100%, 0 34px);
    color: #fff;
  }

  .editing strong {
    flex: 1;
    text-align: center;
    font-weight: 500;
  }

  .editing button {
    width: 46px;
    height: 32px;
    border-left: 1px solid #85858f;
  }

  /* contour dialog */
  .dialog {
    position: absolute;
    top: 61px;
    left: 10px;
    box-sizing: border-box;
    width: 282px;
    border: 1px solid #3f4660;
    border-radius: 6px 6px 0 0;
    background: #f3f4f9;
  }

  .dialog h2 {
    padding-left: 58px;
    border-radius: 5px 5px 0 0;
    background: linear-gradient(#4b4b54, #2c2c36);
    color: #fff;
    font-size: 17px;
    line-height: 29px;
  }

  .badge {
    position: absolute;
    top: -12px;
    left: 0;
    display: grid;
    place-items: center;
    box-sizing: border-box;
    width: 52px;
    height: 54px;
    border: 3px solid #3a3f50;
    border-radius: 50%;
    background: #fff;
  }

  .body {
    padding: 16px 8px 5px;
  }

  fieldset {
    min-width: 0;
    margin: 0;
    padding: 0 0 16px 11px;
    border: 1px solid #b6b9c4;
    border-radius: 5px;
  }

  legend {
    padding: 0 6px;
    margin-left: -4px;
  }

  .choices {
    display: flex;
    height: 47px;
    margin-bottom: 6px;
  }

  .choices button {
    box-sizing: border-box;
    width: 47px;
    height: 47px;
  }

  .options {
    display: grid;
    gap: 12px;
    padding-top: 18px;
  }

  .options label {
    display: flex;
    align-items: center;
    gap: 7px;
  }

  .off {
    color: #5c5c7c;
  }

  .body p {
    margin: 12px 0 3px;
    padding-left: 3px;
  }

  .start {
    display: flex;
    align-items: center;
    justify-content: space-between;
    padding-right: 3px;
  }

  .start .coords {
    width: 238px;
  }

  .coords {
    display: grid;
    grid-template-columns: 27px 1fr;
    align-items: center;
    gap: 2px 4px;
    box-sizing: border-box;
    height: 83px;
    padding: 2px 3px;
    border: 2px solid #a6a6aa;
    outline: 2px solid #e3e3e3;
    outline-offset: -4px;
    background: #f5f6fa;
  }

  .coords label {
    padding-left: 3px;
  }

  .coords input {
    box-sizing: border-box;
    width: 100%;
    min-width: 0;
    height: 36px;
    border: 1px solid #9c9ca4;
    border-radius: 0;
    background: #fff;
    font: inherit;
  }

  .focus {
    border: 3px solid #2f6294;
    outline: 2px solid #9fdcf4;
    outline-offset: -5px;
    padding: 1px 2px;
  }

  .disabled {
    color: #6a6a84;
  }

  .disabled input {
    background: #aecbeb;
  }

  .viewtools {
    position: absolute;
    top: 18px;
    right: 6px;
    display: grid;
    gap: 13px;
  }

  .viewtools div {
    display: flex;
    align-items: center;
    gap: 9px;
    width: 55px;
  }

  /* right hand project tabs */
  .projects {
    display: flex;
    flex-direction: column;
    gap: 16px;
    width: 28px;
    margin-left: 4px;
    padding-top: 1px;
  }

  .projects button {
    box-sizing: border-box;
    justify-content: flex-start;
    gap: 3px;
    width: 28px;
    height: 116px;
    padding-top: 2px;
    border: 1px solid #a3a3ab;
    border-right: 0;
    border-radius: 5px 0 0 5px;
    background: linear-gradient(90deg, #f4f4f8, #d2d2da);
    writing-mode: vertical-rl;
    font-size: 17px;
  }

  /* footer */
  footer {
    padding-top: 2px;
  }

  .search {
    gap: 5px;
    height: 31px;
    padding: 0 10px 0 3px;
    border: 1px solid #8c8c96;
    border-radius: 5px 5px 0 0;
    box-sizing: border-box;
    background: linear-gradient(#efeff4, #bcbcc6);
  }

  .status {
    display: flex;
    align-items: center;
    gap: 20px;
    height: 38px;
    padding: 6px 2px 0 5px;
    box-sizing: border-box;
    font-size: 18px;
  }

  .prompt {
    margin-right: auto;
    font-size: 17px;
  }

  .layers {
    margin: 0 24px;
  }

  .precision {
    margin-right: 50px;
  }

  .grip {
    align-self: flex-end;
    width: 16px;
    height: 16px;
    background: radial-gradient(#8c8c96 40%, transparent 45%) 0 0 / 5px 5px;
    clip-path: polygon(100% 0, 100% 100%, 0 100%);
  }
</style>
